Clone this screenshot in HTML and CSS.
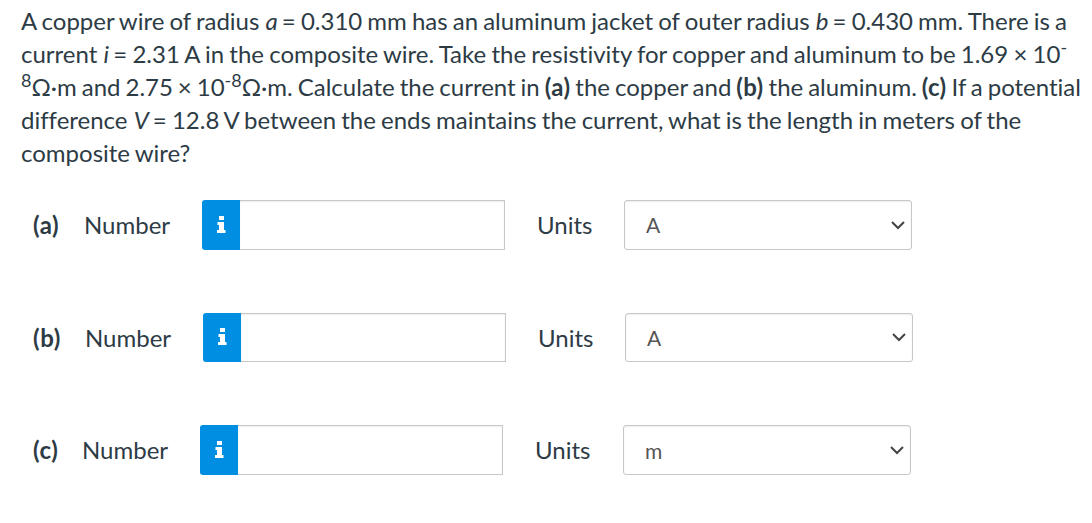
FILE: index.html
```html
<!DOCTYPE html>
<html lang="en">
<head>
    <meta charset="UTF-8">
    <meta name="viewport" content="width=device-width, initial-scale=1.0">
    <title>Composite Wire</title>
    <link rel="stylesheet" href="styles.css">
</head>
<body>

    <div class="question">
        <p class="line">A copper wire of radius <i>a</i> = 0.310 mm has an aluminum jacket of outer radius <i>b</i> = 0.430 mm. There is a</p>
        <p class="line loose">current <i>i</i> = 2.31 A in the composite wire. Take the resistivity for copper and aluminum to be 1.69 × 10<sup>-</sup></p>
        <p class="line tight"><sup>8</sup>Ω·m and 2.75 × 10<sup>-8</sup>Ω·m. Calculate the current in <b>(a)</b> the copper and <b>(b)</b> the aluminum. <b>(c)</b> If a potential</p>
        <p class="line">difference <i>V</i> = 12.8 V between the ends maintains the current, what is the length in meters of the</p>
        <p class="line">composite wire?</p>
    </div>

    <div class="answers">
        <div class="row row-a">
            <b class="part">(a)</b>
            <label class="label" for="numA">Number</label>
            <div class="field">
                <span class="info"><svg width="9" height="17" viewBox="0 0 9 17"><path d="M2 0h5v4H2zM0.5 6H7v8h1.5v3H0v-3h2V9H0.5z"/></svg></span>
                <input type="text" id="numA">
            </div>
            <label class="units" for="unitA">Units</label>
            <div class="select-box">
                <select id="unitA"><option>A</option></select>
                <svg class="arrow" width="14" height="9" viewBox="0 0 14 9"><path d="M1 1l6 6 6-6"/></svg>
            </div>
        </div>

        <div class="row row-b">
            <b class="part">(b)</b>
            <label class="label" for="numB">Number</label>
            <div class="field">
                <span class="info"><svg width="9" height="17" viewBox="0 0 9 17"><path d="M2 0h5v4H2zM0.5 6H7v8h1.5v3H0v-3h2V9H0.5z"/></svg></span>
                <input type="text" id="numB">
            </div>
            <label class="units" for="unitB">Units</label>
            <div class="select-box">
                <select id="unitB"><option>A</option></select>
                <svg class="arrow" width="14" height="9" viewBox="0 0 14 9"><path d="M1 1l6 6 6-6"/></svg>
            </div>
        </div>

        <div class="row row-c">
            <b class="part">(c)</b>
            <label class="label" for="numC">Number</label>
            <div class="field">
                <span class="info"><svg width="9" height="17" viewBox="0 0 9 17"><path d="M2 0h5v4H2zM0.5 6H7v8h1.5v3H0v-3h2V9H0.5z"/></svg></span>
                <input type="text" id="numC">
            </div>
            <label class="units" for="unitC">Units</label>
            <div class="select-box">
                <select id="unitC"><option>m</option></select>
                <svg class="arrow" width="14" height="9" viewBox="0 0 14 9"><path d="M1 1l6 6 6-6"/></svg>
            </div>
        </div>
    </div>

</body>
</html>
```
FILE: styles.css
```css
* {
    box-sizing: border-box;
}

body {
    margin: 0;
    padding: 4px 0 0 21px;
    background-color: #fff;
    color: #2d3b45;
    font-family: Lato, sans-serif;
    font-size: 24px;
    line-height: 33px;
    font-variant-ligatures: none;
}

.line {
    margin: 0;
    height: 33px;
    white-space: nowrap;
    word-spacing: -1.03px;
}

.loose {
    word-spacing: -0.92px;
}

.tight {
    word-spacing: -1.2px;
}

.tight b {
    letter-spacing: 0.4px;
}

.line i {
    margin: 0 -1px 0 1px;
}

.part {
    width: 51px;
    letter-spacing: 0.6px;
}

sup {
    font-size: 75%;
    line-height: 0;
    position: relative;
    top: -0.5em;
    vertical-align: baseline;
}

.answers {
    display: flex;
    flex-direction: column;
    gap: 63px;
    margin-top: 31px;
    padding-left: 12px;
}

.row {
    display: flex;
    align-items: center;
    height: 50px;
}

.row-b {
    height: 49px;
}

.part,
.label,
.units {
    padding-bottom: 2px;
}

.row-b .part,
.row-b .label,
.row-b .units {
    padding-bottom: 0;
}

.row-b .part {
    width: 52px;
}

.row-c .part {
    width: 49px;
}

.label {
    width: 118px;
}

.field {
    display: flex;
    width: 303px;
    height: 100%;
    margin-right: 32px;
}

.info {
    display: flex;
    align-items: center;
    justify-content: center;
    width: 38px;
    padding: 0 0 2px 1px;
    background-color: #008ee2;
    border-radius: 3px 0 0 3px;
}

.info svg {
    fill: #fff;
}

input {
    flex: 1;
    min-width: 0;
    border: 1px solid #c7c7c7;
    border-left: 0;
    box-shadow: inset 0 1px 2px #eee;
}

.units {
    width: 87px;
}

.row-c .units {
    width: 88px;
}

.select-box {
    position: relative;
    width: 288px;
    height: 100%;
}

select {
    width: 100%;
    height: 100%;
    padding: 0 21px;
    appearance: none;
    background-color: #fff;
    border: 1px solid #c7c7c7;
    border-radius: 3px;
    box-shadow: inset 0 1px 2px #eee;
    color: #555;
    font-family: Lato, sans-serif;
    font-size: 21px;
}

.row-a select {
    padding-bottom: 2px;
}

.arrow {
    position: absolute;
    right: 7px;
    top: 21px;
    fill: none;
    stroke: #444;
    stroke-width: 2;
}

.row-b .arrow {
    top: 20px;
}
```
